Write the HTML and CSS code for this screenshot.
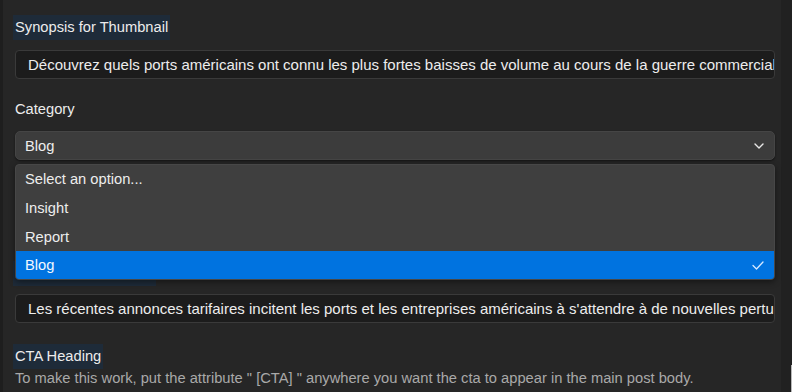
FILE: index.html
```html
<!DOCTYPE html>
<html lang="en">
<head>
<meta charset="utf-8">
<title>Post settings</title>
<link rel="stylesheet" href="styles.css">
</head>
<body>
<div class="page">
  <div class="edge-left"></div>
  <main class="content">
    <div class="field">
      <span class="label hl">Synopsis for Thumbnail</span>
      <div class="input">Découvrez quels ports américains ont connu les plus fortes baisses de volume au cours de la guerre commerciale entre les États-Unis et la Chine.</div>
    </div>

    <div class="field gap-lg">
      <span class="label">Category</span>
      <div class="select-wrap">
        <div class="select">
          <span>Blog</span>
          <svg class="chev" width="10" height="6" viewBox="0 0 10 6"><path d="M1 1l4 4 4-4" fill="none" stroke="#e8e8e8" stroke-width="1.4" stroke-linecap="round" stroke-linejoin="round"/></svg>
        </div>
        <ul class="dropdown">
          <li class="opt">Select an option...</li>
          <li class="opt">Insight</li>
          <li class="opt">Report</li>
          <li class="opt selected">Blog
            <svg class="check" width="12" height="9" viewBox="0 0 12 9"><path d="M1 4.5l3.5 3.5L11 1" fill="none" stroke="#d6e9ff" stroke-width="1.3" stroke-linecap="round" stroke-linejoin="round"/></svg>
          </li>
        </ul>
      </div>
    </div>

    <div class="field gap-hidden">
      <span class="label hl">Hero Banner Content</span>
      <div class="input tight">Les récentes annonces tarifaires incitent les ports et les entreprises américains à s'attendre à de nouvelles perturbations de leurs chaînes d'approvisionnement.</div>
    </div>

    <div class="field gap-md">
      <span class="label hl">CTA Heading</span>
      <p class="help">To make this work, put the attribute " [CTA] " anywhere you want the cta to appear in the main post body.</p>
    </div>
  </main>
  <div class="edge-right"><div class="thumb"></div></div>
</div>
</body>
</html>
```

FILE: styles.css
```css
* { box-sizing: border-box; }
html, body {
  margin: 0;
  padding: 0;
  height: 100%;
  background: #262626;
  overflow: hidden;
}
body {
  font-family: "Liberation Sans", Arial, sans-serif;
  font-size: 14.7px;
  color: #e8e8e8;
}
.page {
  display: flex;
  height: 392px;
}
.edge-left {
  width: 3px;
  background: #1e1e1e;
  flex: none;
}
.content {
  flex: 1;
  min-width: 0;
  padding: 15px 6px 0 12px;
}
.edge-right {
  width: 11px;
  flex: none;
  background: #212121;
  display: flex;
  justify-content: flex-end;
  padding-top: 365px;
}
.thumb {
  width: 1px;
  background: #b8b8b8;
  height: 27px;
}
.field {
  display: flex;
  flex-direction: column;
  align-items: flex-start;
}
.gap-lg { margin-top: 18px; }
.gap-hidden { margin-top: 101px; }
.gap-md { margin-top: 21px; }
.label {
  display: inline-block;
  line-height: 21px;
  padding: 2px 2px;
  margin-left: -2px;
  color: #ececec;
}
.label.hl { background: #1e2b39; }
.input {
  margin-top: 10px;
  width: 100%;
  height: 29px;
  line-height: 27px;
  font-size: 15px;
  background: #1c1c1c;
  border: 1px solid #3a3a3a;
  border-radius: 4px;
  padding: 0 12px;
  white-space: nowrap;
  overflow: hidden;
  color: #ededed;
}
.input.tight { margin-top: 8px; }
.select-wrap {
  position: relative;
  width: 100%;
  margin-top: 9px;
}
.select {
  height: 29px;
  background: #3c3c3c;
  border: 1px solid #454545;
  border-radius: 5px;
  padding: 0 9px;
  display: flex;
  align-items: center;
  justify-content: space-between;
  box-shadow: 0 1px 2px rgba(0,0,0,0.5);
  color: #ededed;
}
.chev { margin-right: 1px; }
.dropdown {
  position: absolute;
  top: calc(100% + 4px);
  left: 0;
  right: 0;
  margin: 0;
  padding: 0;
  list-style: none;
  background: #3f3f3f;
  border: 1px solid #474747;
  border-radius: 4px;
  overflow: hidden;
  box-shadow: 0 2px 6px rgba(0,0,0,0.45);
  z-index: 5;
}
.opt {
  height: 29px;
  display: flex;
  align-items: center;
  justify-content: space-between;
  padding: 0 10px 0 9px;
  color: #ededed;
}
.opt:first-child { height: 28px; }
.opt.selected {
  height: 28px;
  background: #0073e0;
  color: #f2f8ff;
}
.check { margin-right: 0; }
.help {
  margin: 0;
  line-height: 18px;
  color: #a9a9a9;
}
```
